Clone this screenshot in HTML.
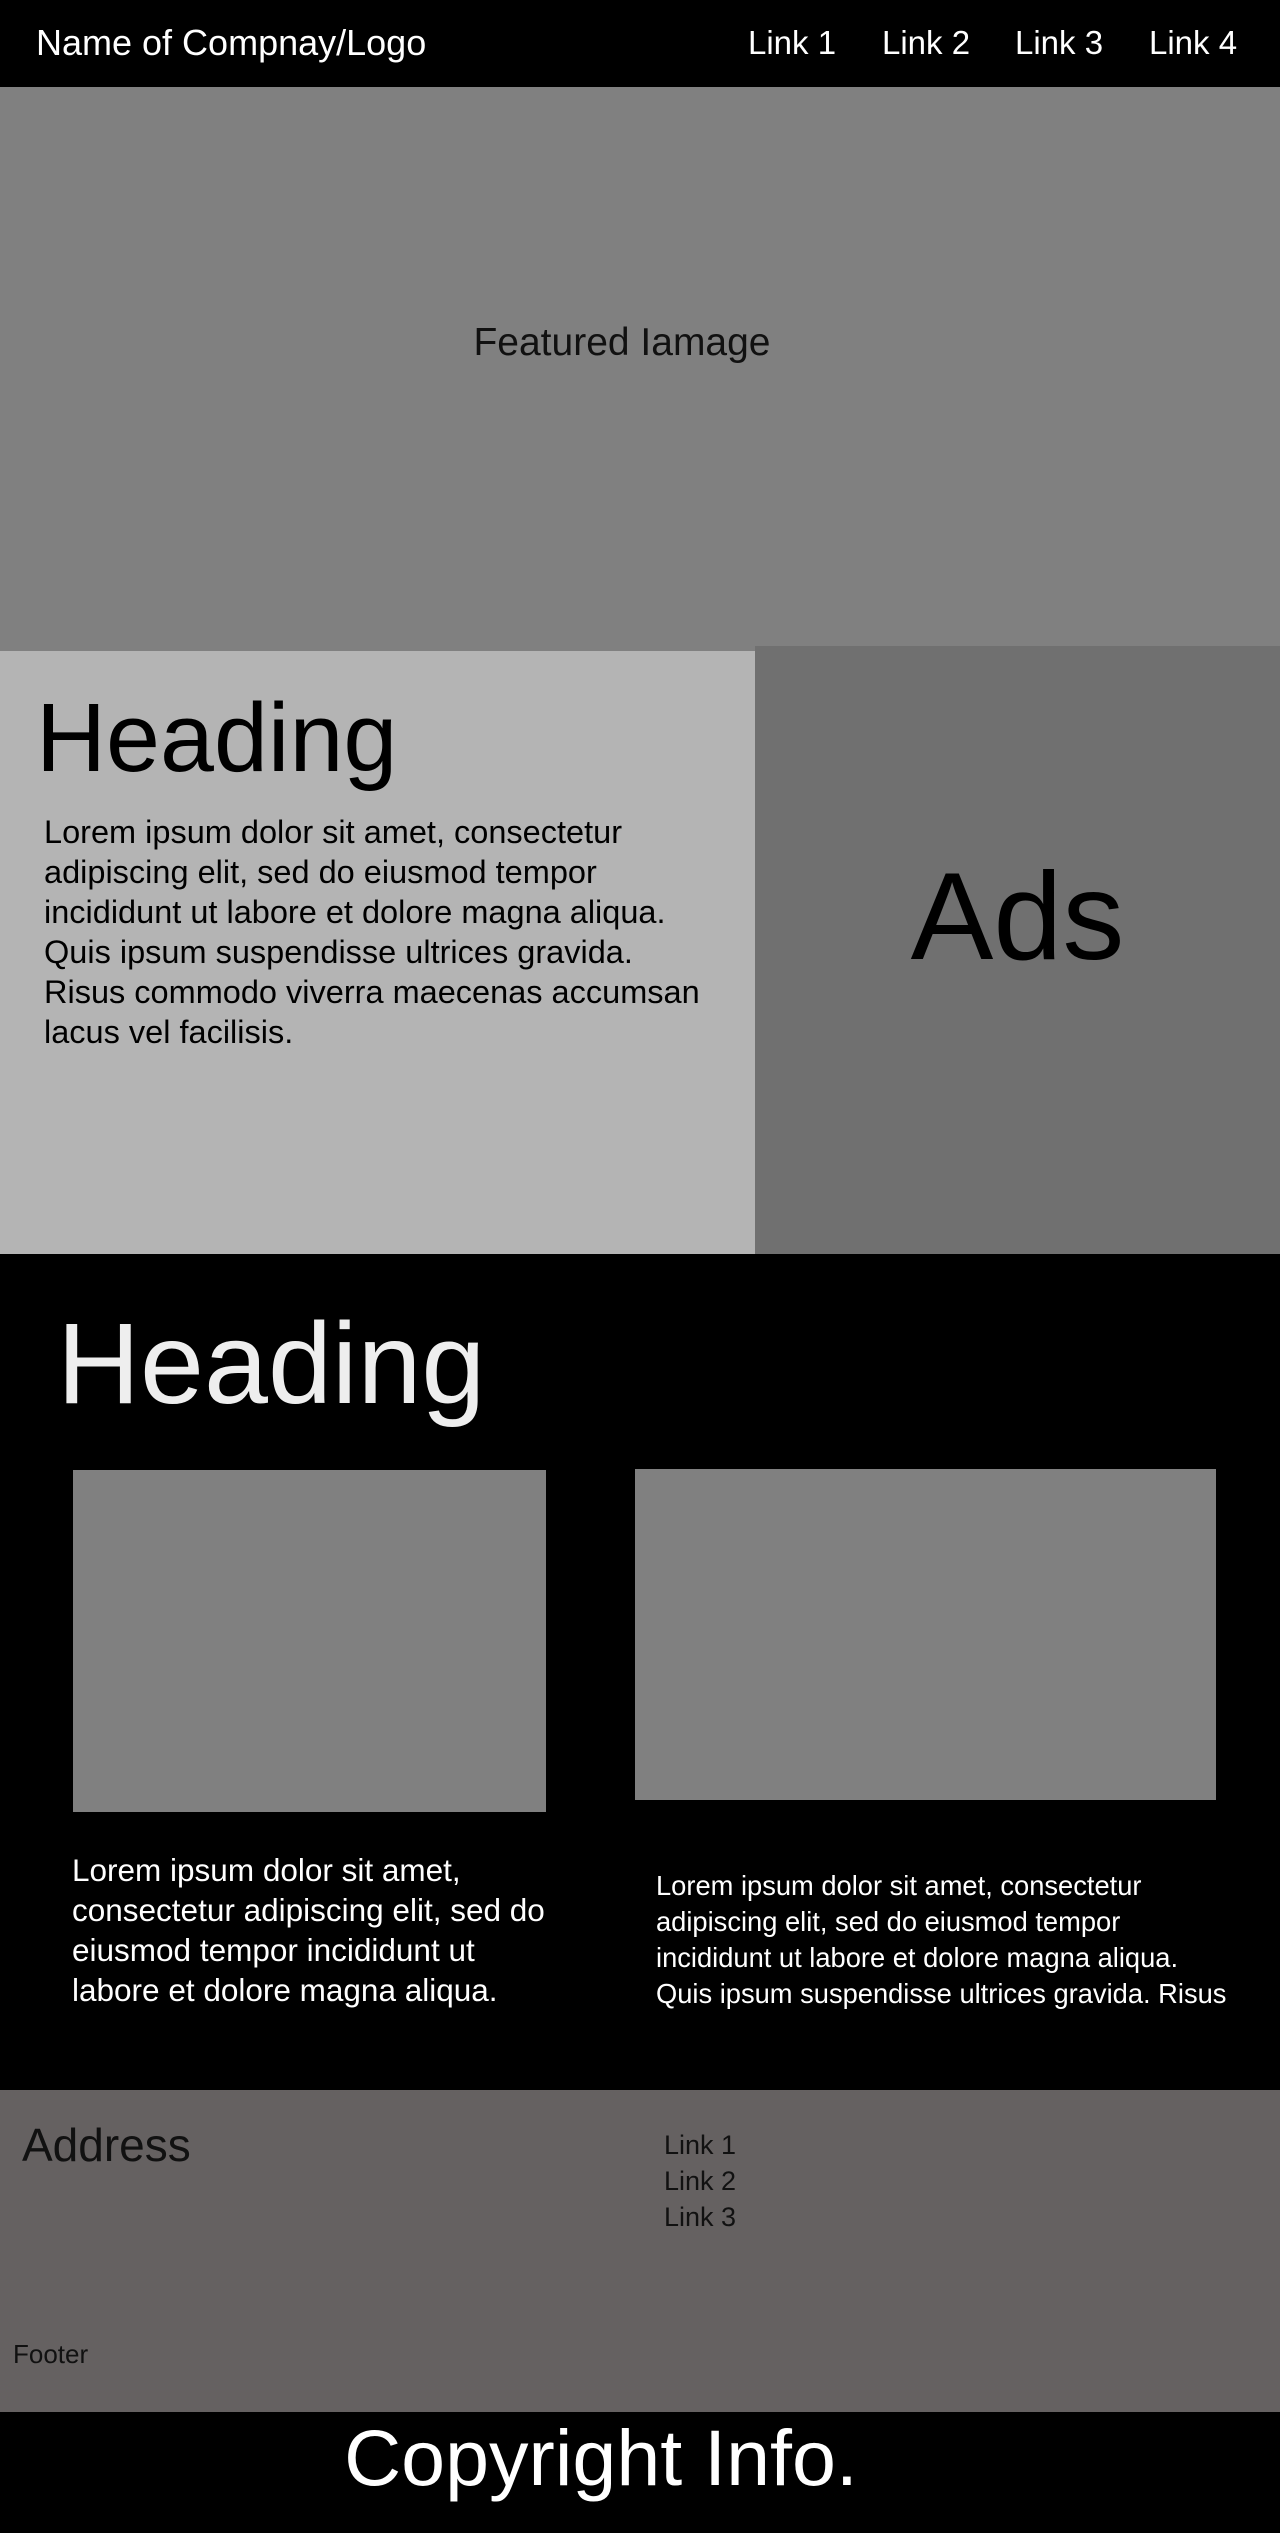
<!DOCTYPE html>
<html><head><meta charset="utf-8"><style>
*{margin:0;padding:0;box-sizing:border-box}
body{width:1280px;height:2533px;position:relative;font-family:"Liberation Sans",sans-serif;background:#000;overflow:hidden}
.a{position:absolute;white-space:nowrap}
</style></head><body>
<div class="a" style="left:0;top:0;width:1280px;height:87px;background:#000"></div>
<div class="a" style="left:36px;top:22px;font-size:36px;color:#fff">Name of Compnay/Logo</div>
<div class="a" style="left:748px;top:24px;font-size:33px;color:#fff">Link 1</div>
<div class="a" style="left:882px;top:24px;font-size:33px;color:#fff">Link 2</div>
<div class="a" style="left:1015px;top:24px;font-size:33px;color:#fff">Link 3</div>
<div class="a" style="left:1149px;top:24px;font-size:33px;color:#fff">Link 4</div>

<div class="a" style="left:0;top:87px;width:1280px;height:564px;background:#808080"></div>
<div class="a" style="left:0;top:321px;width:1244px;text-align:center;font-size:39px;color:#111">Featured Iamage</div>

<div class="a" style="left:0;top:651px;width:755px;height:603px;background:#b4b4b4"></div>
<div class="a" style="left:755px;top:646px;width:525px;height:608px;background:#707070"></div>
<div class="a" style="left:36px;top:682px;font-size:97px;color:#000">Heading</div>
<div class="a" style="left:44px;top:812px;font-size:32.5px;line-height:40px;color:#000">Lorem ipsum dolor sit amet, consectetur<br>adipiscing elit, sed do eiusmod tempor<br>incididunt ut labore et dolore magna aliqua.<br>Quis ipsum suspendisse ultrices gravida.<br>Risus commodo viverra maecenas accumsan<br>lacus vel facilisis.</div>
<div class="a" style="left:755px;top:846px;width:525px;text-align:center;font-size:124px;color:#000">Ads</div>

<div class="a" style="left:0;top:1254px;width:1280px;height:836px;background:#000"></div>
<div class="a" style="left:57px;top:1298px;font-size:115px;color:#eee">Heading</div>
<div class="a" style="left:73px;top:1470px;width:473px;height:342px;background:#808080"></div>
<div class="a" style="left:635px;top:1469px;width:581px;height:331px;background:#808080"></div>
<div class="a" style="left:72px;top:1850px;font-size:31.5px;line-height:40px;color:#fff">Lorem ipsum dolor sit amet,<br>consectetur adipiscing elit, sed do<br>eiusmod tempor incididunt ut<br>labore et dolore magna aliqua.</div>
<div class="a" style="left:656px;top:1868px;font-size:27.3px;line-height:36px;color:#fff">Lorem ipsum dolor sit amet, consectetur<br>adipiscing elit, sed do eiusmod tempor<br>incididunt ut labore et dolore magna aliqua.<br>Quis ipsum suspendisse ultrices gravida. Risus</div>

<div class="a" style="left:0;top:2090px;width:1280px;height:322px;background:#656161"></div>
<div class="a" style="left:22px;top:2118px;font-size:46px;color:#111">Address</div>
<div class="a" style="left:664px;top:2127px;font-size:27px;line-height:36px;color:#111">Link 1<br>Link 2<br>Link 3</div>
<div class="a" style="left:13px;top:2339px;font-size:26px;color:#111">Footer</div>

<div class="a" style="left:0;top:2412px;width:1280px;height:121px;background:#000"></div>
<div class="a" style="left:0;top:2412px;width:1202px;text-align:center;font-size:79px;color:#fff">Copyright Info.</div>
</body></html>
